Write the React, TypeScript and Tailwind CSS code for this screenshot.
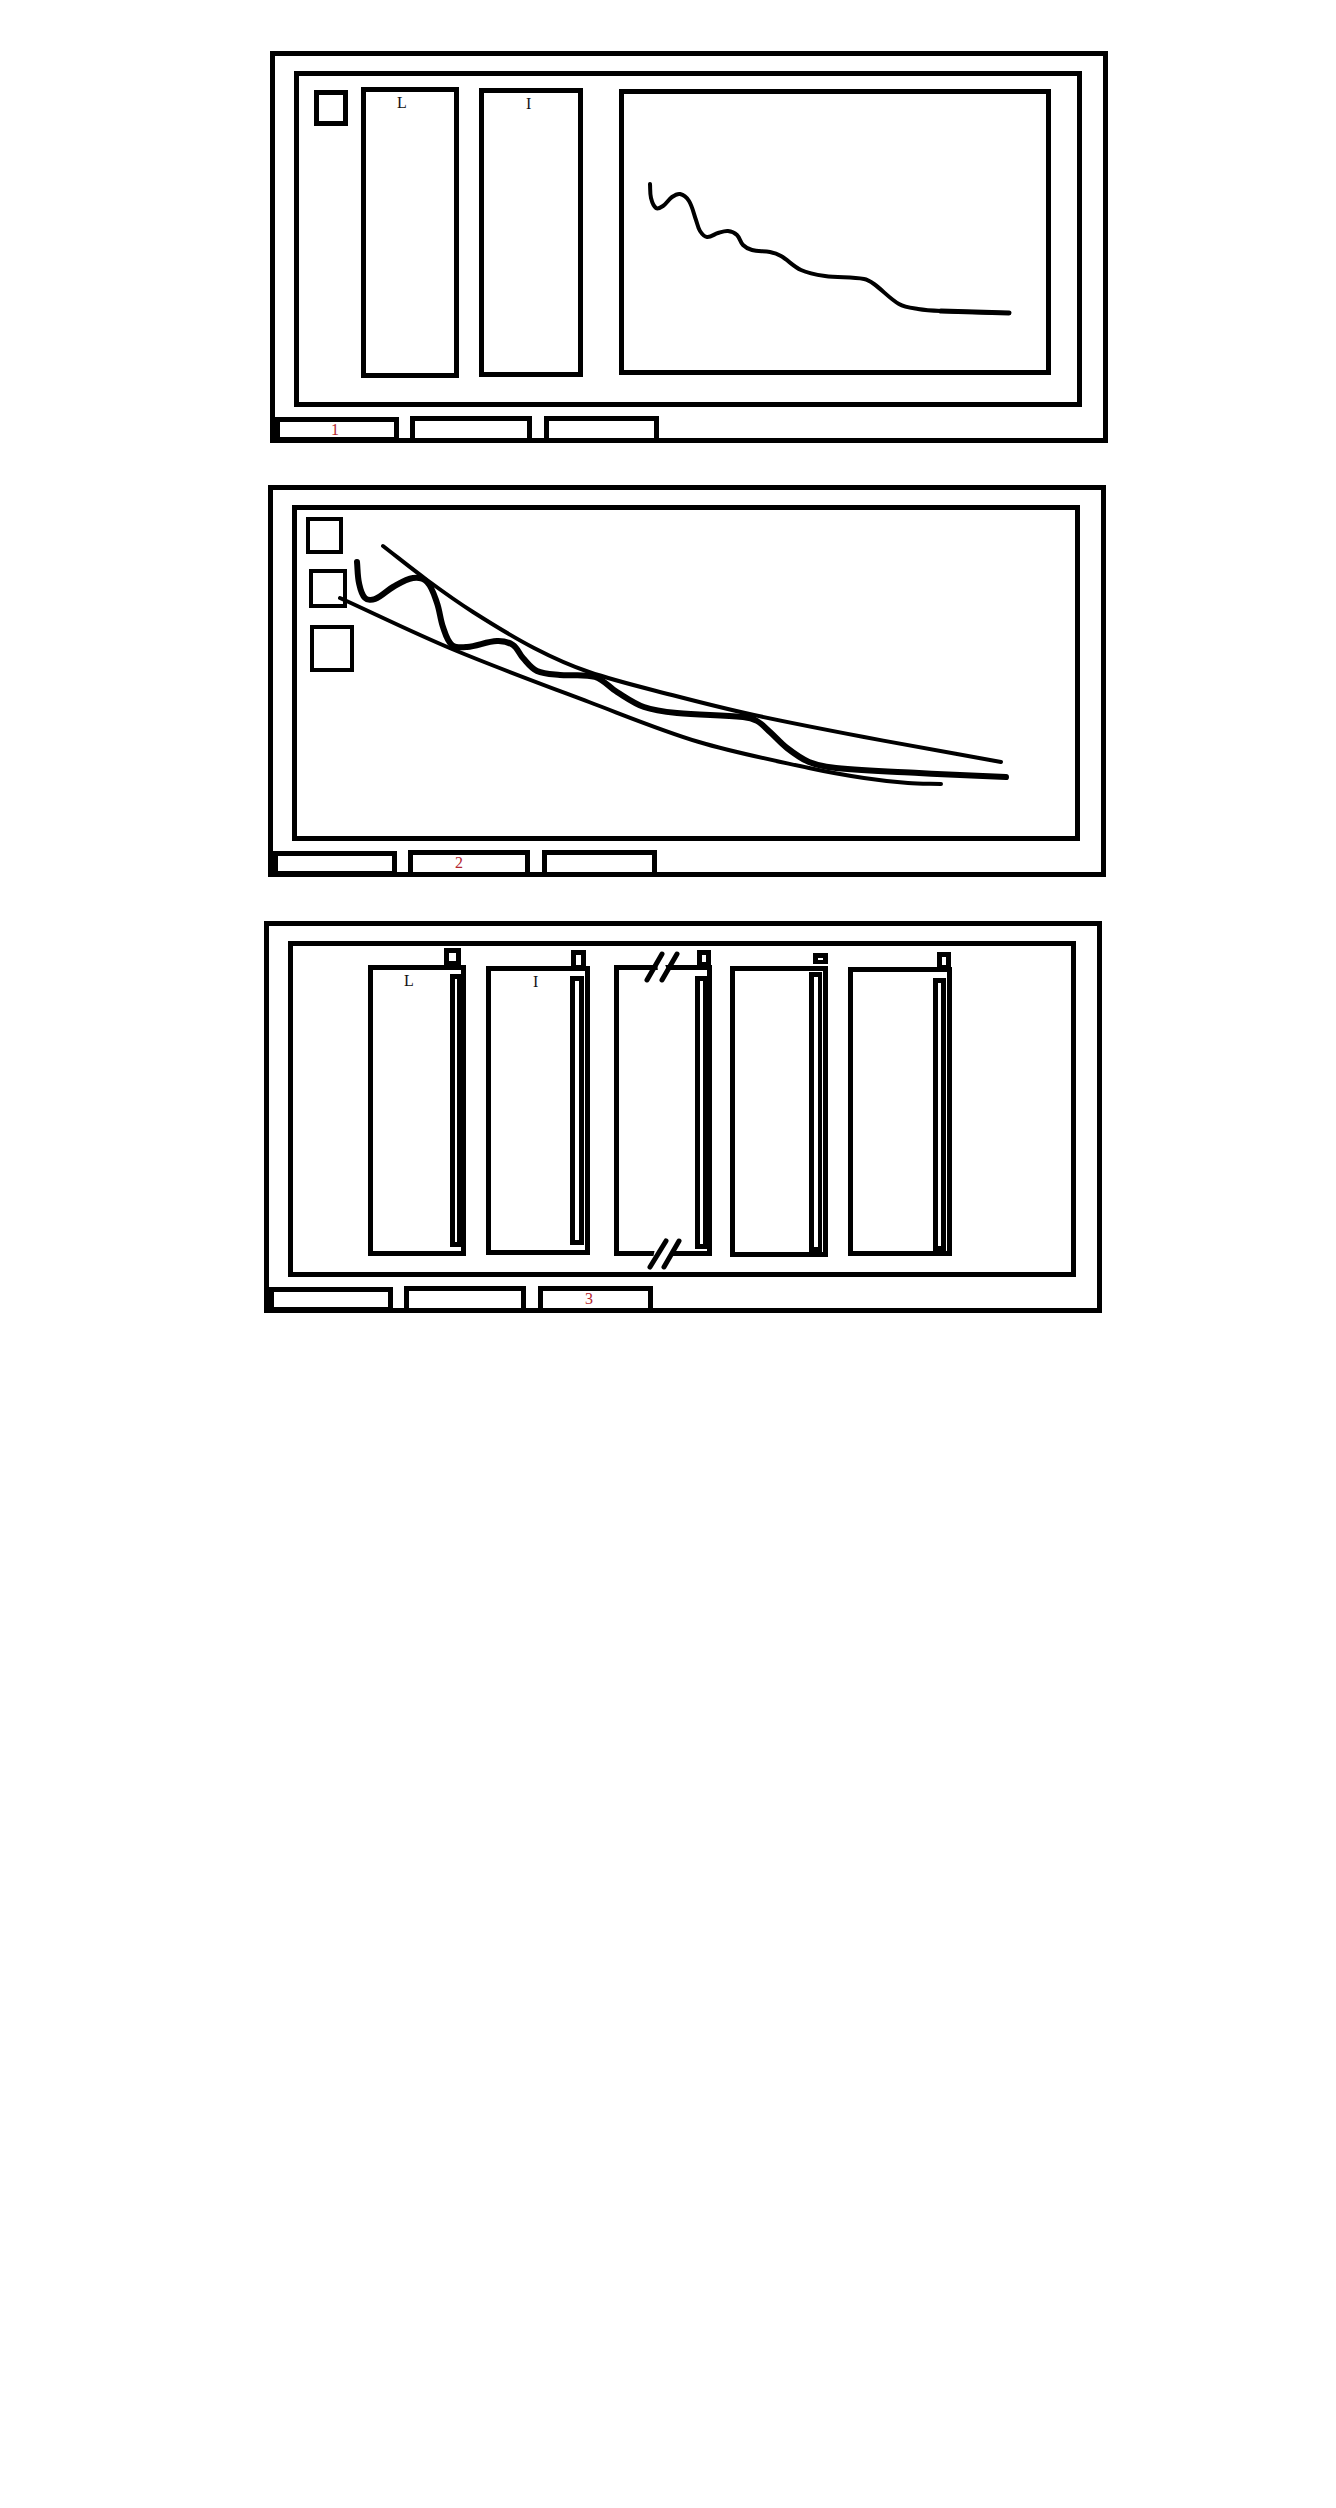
import type { ReactNode } from 'react';

type Point = [number, number];

function tangent(a: Point, b: Point): Point {
  const dx = b[0] - a[0];
  const dy = b[1] - a[1];
  const len = Math.hypot(dx, dy) || 1;
  return [dx / len, dy / len];
}

// smooth line through the hand-read points, handles sized by segment length so uneven spacing doesn't kink
function smooth(points: Point[]) {
  let d = `M${points[0][0]} ${points[0][1]}`;
  for (let i = 0; i < points.length - 1; i++) {
    const p1 = points[i];
    const p2 = points[i + 1];
    const t1 = tangent(points[i - 1] ?? p1, p2);
    const t2 = tangent(p1, points[i + 2] ?? p2);
    const h = Math.hypot(p2[0] - p1[0], p2[1] - p1[1]) / 3;
    d += ` C${p1[0] + t1[0] * h} ${p1[1] + t1[1] * h} ${p2[0] - t2[0] * h} ${p2[1] - t2[1] * h} ${p2[0]} ${p2[1]}`;
  }
  return d;
}

const chartLine: Point[] = [
  [650, 184], [651, 198], [656, 208], [663, 206], [672, 197], [680, 194], [689, 201], [696, 220], [700, 231], [707, 237],
  [718, 233], [728, 231], [737, 235], [743, 245], [752, 250], [770, 252], [781, 256], [801, 270], [825, 276], [864, 279], [874, 284],
  [899, 304], [918, 309], [941, 311], [1009, 313],
];

const noisyLine: Point[] = [
  [357, 562], [359, 583], [365, 598], [375, 599], [393, 587], [413, 578], [427, 582], [437, 603],
  [443, 627], [452, 645], [467, 647], [497, 641], [513, 645], [523, 658], [537, 671], [560, 675],
  [595, 677], [617, 692], [644, 707], [677, 713], [743, 717], [757, 721], [770, 732], [787, 748], [809, 762],
  [836, 768], [919, 773], [1006, 777],
];

const upperLine: Point[] = [
  [383, 546], [427, 580], [473, 612], [534, 648], [589, 672], [672, 695], [754, 715], [864, 737], [1001, 762],
];

const lowerLine: Point[] = [
  [340, 598], [452, 649], [589, 702], [699, 742], [809, 768], [864, 778], [908, 783], [941, 784],
];

const tabs = [
  { label: '1', className: 'w-[124px] h-[21px] border-b pl-[51px]' },
  { label: '2', className: 'ml-[11px] w-[122px] h-[22px] pl-[42px]' },
  { label: '3', className: 'ml-[12px] w-[115px] h-[22px] pl-[42px]' },
];

function Frame({ active, className, children }: { active: string; className: string; children: ReactNode }) {
  return (
    <div className={`flex h-[392px] w-[838px] flex-col border-[5px] border-black ${className}`}>
      <div className="relative ml-[19px] mt-[15px] flex h-[336px] w-[788px] border-[5px] border-black">{children}</div>
      <div className="mt-auto flex items-end">
        {tabs.map((tab) => (
          <div
            key={tab.label}
            className={`border-x-[5px] border-t-[5px] border-black text-[16px] leading-[16px] text-[#b3262e] ${tab.className}`}
          >
            {tab.label === active ? tab.label : ''}
          </div>
        ))}
      </div>
    </div>
  );
}

function Square({ className }: { className: string }) {
  return <div className={`border-black ${className}`} />;
}

function Label({ text, className }: { text: string; className: string }) {
  return <span className={`mt-[2px] block text-[16px] leading-[18px] text-[#111] ${className}`}>{text}</span>;
}

function Column({
  className,
  label,
  labelClass,
  barClass,
  handleClass,
  holeClass,
}: {
  className: string;
  label?: string;
  labelClass?: string;
  barClass: string;
  handleClass: string;
  holeClass: string;
}) {
  return (
    <div className={`relative flex shrink-0 border-[5px] border-black ${className}`}>
      <div className="flex-1">{label && <Label text={label} className={labelClass ?? ''} />}</div>
      <div className={`shrink-0 border-[5px] border-black ${barClass}`} />
      <div className={`absolute bg-black pl-[5px] pt-[5px] ${handleClass}`}>
        <div className={`bg-white ${holeClass}`} />
      </div>
    </div>
  );
}

export default function App() {
  return (
    <div className="h-[2508px] w-[1336px] overflow-hidden bg-white pt-[51px] font-['Liberation_Serif',serif]">
      <Frame active="1" className="ml-[270px]">
        <Square className="ml-[15px] mt-[14px] h-[36px] w-[34px] shrink-0 border-[5px]" />
        <div className="ml-[13px] mt-[11px] h-[291px] w-[98px] shrink-0 border-[5px] border-black">
          <Label text="L" className="pl-[31px]" />
        </div>
        <div className="ml-[20px] mt-[12px] h-[289px] w-[104px] shrink-0 border-[5px] border-black">
          <Label text="I" className="pl-[42px]" />
        </div>
        <div className="ml-[36px] mt-[13px] h-[286px] w-[432px] shrink-0 border-[5px] border-black">
          <svg width="422" height="276" viewBox="624 94 422 276" fill="none" className="block">
            <path d={smooth(chartLine)} stroke="#000" strokeWidth="4" strokeLinecap="round" />
            <path d={smooth(chartLine.slice(-2))} stroke="#000" strokeWidth="5" strokeLinecap="round" />
          </svg>
        </div>
      </Frame>

      <Frame active="2" className="ml-[268px] mt-[42px]">
        <div className="flex flex-col items-start">
          <Square className="ml-[9px] mt-[7px] h-[37px] w-[37px] border-4" />
          <Square className="ml-[12px] mt-[15px] h-[39px] w-[38px] border-4" />
          <Square className="ml-[13px] mt-[17px] h-[47px] w-[44px] border-4" />
        </div>
        <svg viewBox="297 510 778 326" fill="none" className="absolute inset-0 h-full w-full">
          <path d={smooth(upperLine)} stroke="#000" strokeWidth="4" strokeLinecap="round" />
          <path d={smooth(lowerLine)} stroke="#000" strokeWidth="4" strokeLinecap="round" />
          <path d={smooth(noisyLine)} stroke="#000" strokeWidth="6" strokeLinecap="round" />
        </svg>
      </Frame>

      <Frame active="3" className="ml-[264px] mt-[44px]">
        <Column
          className="ml-[75px] mt-[19px] h-[291px] w-[98px]"
          label="L"
          labelClass="pl-[31px]"
          barClass="mb-[4px] mt-[4px] w-[11px] border-r-[4px]"
          handleClass="-top-[22px] right-0 h-[22px] w-[17px]"
          holeClass="h-[8px] w-[7px]"
        />
        <Column
          className="ml-[20px] mt-[20px] h-[289px] w-[104px]"
          label="I"
          labelClass="pl-[42px]"
          barClass="mb-[5px] mr-[1px] mt-[5px] w-[14px]"
          handleClass="-top-[21px] -right-px h-[21px] w-[15px]"
          holeClass="h-[10px] w-[5px]"
        />
        <Column
          className="ml-[24px] mt-[19px] h-[291px] w-[98px]"
          barClass="mb-[2px] mt-[6px] w-[12px] border-r-[4px]"
          handleClass="-top-[20px] -right-[4px] h-[20px] w-[14px]"
          holeClass="h-[7px] w-[4px]"
        />
        <Column
          className="ml-[18px] mt-[20px] h-[291px] w-[98px]"
          barClass="mr-[1px] mt-[1px] w-[13px] border-r-[4px]"
          handleClass="-top-[18px] -right-[5px] h-[11px] w-[15px]"
          holeClass="h-[2px] w-[5px]"
        />
        <Column
          className="ml-[20px] mt-[21px] h-[289px] w-[104px]"
          barClass="mr-[1px] mt-[6px] w-[13px]"
          handleClass="-top-[20px] -right-[4px] h-[20px] w-[14px]"
          holeClass="h-[8px] w-[4px]"
        />
        <svg viewBox="293 946 778 326" fill="none" className="absolute inset-0 h-full w-full">
          <polygon points="657,962 664,962 668,972 658,972" fill="#fff" />
          <polygon points="655,1249 672,1249 670,1258 653,1258" fill="#fff" />
          <path d="M647 980L662 954M662 980L677 954" stroke="#000" strokeWidth="5" strokeLinecap="round" />
          <path d="M650 1267L666 1241M664 1267L679 1241" stroke="#000" strokeWidth="5" strokeLinecap="round" />
        </svg>
      </Frame>
    </div>
  );
}
